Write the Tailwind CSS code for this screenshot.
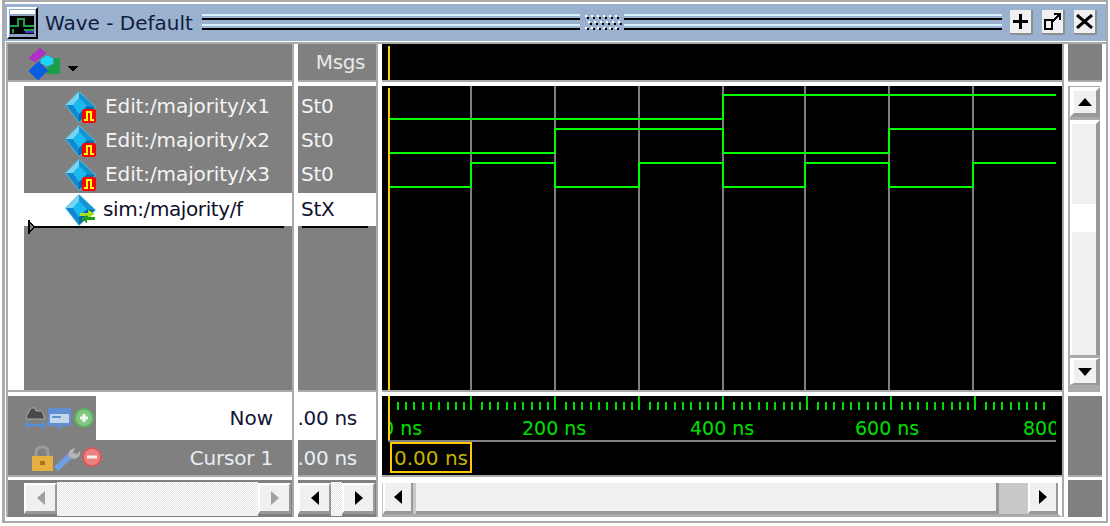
<!DOCTYPE html>
<html lang="en">
<head>
    <meta charset="UTF-8">
    <title>Wave - Default</title>
    <script src="https://cdn.jsdelivr.net/npm/@tailwindcss/browser@4"></script>
</head>
<body class="bg-white font-['DejaVu_Sans'] text-[20px] overflow-hidden">
    <svg width="0" height="0" class="absolute">
        <symbol id="diamond" viewBox="0 0 32 32">
            <polygon points="14,0 31,16 14,32 0,14" fill="#58c0d8" />
            <polygon points="14,1 1,14 8,14 14,7" fill="#78d4f0" />
            <polygon points="14,7 8,14 14,23 22,15" fill="#18b8f0" />
            <polygon points="14,1 14,7 22,15 30,16" fill="#1094d4" />
            <polygon points="1,14 8,14 14,23 14,31" fill="#1088d0" />
            <polygon points="14,23 22,15 30,16 14,31" fill="#0868a8" />
        </symbol>
        <symbol id="pulse" viewBox="0 0 14 14">
            <rect x="1" y="0" width="12" height="14" fill="#ff0000" />
            <rect x="0" y="1" width="14" height="12" fill="#ff0000" />
            <path d="M2 11h3V3h4v8h3" fill="none" stroke="#ffff00" stroke-width="2" />
        </symbol>
    </svg>

    <div class="ml-[2px] w-[1106px] h-[523px] border-t-2 border-b-2 border-l-[3px] border-r-2 border-[#aaaaaa] bg-white">
        <!-- title bar -->
        <div class="mt-[2px] h-[37px] bg-[#9ab1cf] flex items-center pl-[2px]">
            <div class="w-[31px] h-[32px] border-2 border-t-white border-l-white border-r-black border-b-black bg-[#8ea6c6] flex flex-col p-[1px] gap-[2px] shrink-0">
                <div class="h-[4px] bg-white"></div>
                <svg width="24" height="18" viewBox="0 0 24 18" shape-rendering="crispEdges">
                    <rect width="24" height="18" fill="#000" />
                    <path d="M0 10h8V3h6v7h10" fill="none" stroke="#1fa04a" stroke-width="2" />
                    <path d="M3 13v4M14 14h10" fill="none" stroke="#1fa04a" stroke-width="2" />
                    <rect x="15" y="15" width="9" height="2" fill="#4a30d0" />
                </svg>
            </div>
            <span class="ml-[7px] w-[157px] shrink-0 text-[20px] text-[#101c3c] leading-none">Wave - Default</span>
            <div class="w-[378px] h-[16px] mb-[1px] shrink-0 flex flex-col">
                <div class="h-[2px] bg-[#d2f2fc]"></div>
                <div class="h-[2px] mt-[2px] bg-black"></div>
                <div class="h-[2px] mt-[4px] bg-[#d2f2fc]"></div>
                <div class="h-[2px] mt-[2px] bg-black"></div>
            </div>
            <svg class="ml-[4px] mb-[1px] shrink-0" width="38" height="16" viewBox="0 0 38 16" shape-rendering="crispEdges">
                <path d="M1 1h2v2h-2zM7 1h2v2h-2zM13 1h2v2h-2zM19 1h2v2h-2zM25 1h2v2h-2zM31 1h2v2h-2zM4 7h2v2h-2zM10 7h2v2h-2zM16 7h2v2h-2zM22 7h2v2h-2zM28 7h2v2h-2zM34 7h2v2h-2zM1 13h2v2h-2zM7 13h2v2h-2zM13 13h2v2h-2zM19 13h2v2h-2zM25 13h2v2h-2zM31 13h2v2h-2z" fill="#fff" />
                <path d="M3 3h2v2h-2zM9 3h2v2h-2zM15 3h2v2h-2zM21 3h2v2h-2zM27 3h2v2h-2zM33 3h2v2h-2zM6 9h2v2h-2zM12 9h2v2h-2zM18 9h2v2h-2zM24 9h2v2h-2zM30 9h2v2h-2zM36 9h2v2h-2zM3 14h2v2h-2zM9 14h2v2h-2zM15 14h2v2h-2zM21 14h2v2h-2zM27 14h2v2h-2zM33 14h2v2h-2z" fill="#000" />
            </svg>
            <div class="ml-[2px] w-[378px] h-[16px] mb-[1px] shrink-0 flex flex-col">
                <div class="h-[2px] bg-[#d2f2fc]"></div>
                <div class="h-[2px] mt-[2px] bg-black"></div>
                <div class="h-[2px] mt-[4px] bg-[#d2f2fc]"></div>
                <div class="h-[2px] mt-[2px] bg-black"></div>
            </div>
            <div class="ml-[8px] flex gap-[9px] shrink-0">
                <div class="w-[23px] h-[25px] bg-[#f0f0f0] border-b-2 border-r-2 border-[#8f8f8f] flex items-center justify-center">
                    <svg width="15" height="15" viewBox="0 0 15 15"><path d="M6 0h3v6h6v3H9v6H6V9H0V6h6z" fill="#000" /></svg>
                </div>
                <div class="w-[23px] h-[25px] bg-[#f0f0f0] border-b-2 border-r-2 border-[#8f8f8f] flex items-center justify-center">
                    <svg width="17" height="17" viewBox="0 0 17 17" shape-rendering="crispEdges" fill="none" stroke="#000" stroke-width="2"><path d="M1 7h7v9H1z" /><path d="M10 1h6v6M16 1l-8 8" /></svg>
                </div>
                <div class="w-[23px] h-[25px] bg-[#f0f0f0] border-b-2 border-r-2 border-[#8f8f8f] flex items-center justify-center">
                    <svg width="17" height="15" viewBox="0 0 17 15" fill="none" stroke="#000" stroke-width="3"><path d="M1 1l15 13M16 1L1 14" /></svg>
                </div>
            </div>
        </div>
        <div class="h-[1px] bg-white"></div>
        <div class="h-[2px] bg-[#aaaaaa] ml-[1px]"></div>

        <div class="flex ml-[1px]">
            <div class="w-[2px] h-[473px] bg-[#aaaaaa]"></div>

            <!-- names column -->
            <div class="w-[284px] shrink-0 flex flex-col">
                <div class="h-[36px] bg-[#808080] flex items-start pl-[20px] pt-[2px]">
                    <svg width="50" height="34" viewBox="0 0 50 34" shape-rendering="crispEdges">
                        <polygon points="0,12 12,2 19,7 7,16" fill="#b030c8" />
                        <rect x="19" y="12" width="13" height="16" fill="#18a048" />
                        <polygon points="10,15 20,25 10,34 0,25" fill="#0a5ce0" />
                        <polygon points="12,13 19,9 25,12 25,18 19,21 12,17" fill="#18d8f8" stroke="#5f8a9a" />
                        <polygon points="40,20 50,20 45,26" fill="#000" />
                    </svg>
                </div>
                <div class="h-[2px] bg-[#aaaaaa]"></div>
                <div class="h-[4px] bg-white"></div>
                <div class="h-[304px] flex">
                    <div class="w-[16px] bg-white"></div>
                    <div class="flex-1 bg-[#808080] flex flex-col">
                        <div class="h-[4px]"></div>
                        <div class="h-[34px] flex items-center pl-[41px] gap-[8px] text-[#f4f4f4] tracking-[-0.1px]">
                            <div class="relative w-[32px] h-[32px] shrink-0">
                                <svg width="32" height="32"><use href="#diamond" /></svg>
                                <svg class="absolute left-[17px] top-[18px]" width="14" height="14"><use href="#pulse" /></svg>
                            </div>
                            <span class="leading-none -mt-[2px]">Edit:/majority/x1</span>
                        </div>
                        <div class="h-[34px] flex items-center pl-[41px] gap-[8px] text-[#f4f4f4] tracking-[-0.1px]">
                            <div class="relative w-[32px] h-[32px] shrink-0">
                                <svg width="32" height="32"><use href="#diamond" /></svg>
                                <svg class="absolute left-[17px] top-[18px]" width="14" height="14"><use href="#pulse" /></svg>
                            </div>
                            <span class="leading-none -mt-[2px]">Edit:/majority/x2</span>
                        </div>
                        <div class="h-[34px] flex items-center pl-[41px] gap-[8px] text-[#f4f4f4] tracking-[-0.1px]">
                            <div class="relative w-[32px] h-[32px] shrink-0">
                                <svg width="32" height="32"><use href="#diamond" /></svg>
                                <svg class="absolute left-[17px] top-[18px]" width="14" height="14"><use href="#pulse" /></svg>
                            </div>
                            <span class="leading-none -mt-[2px]">Edit:/majority/x3</span>
                        </div>
                        <div class="h-[33px] mt-[1px] bg-white flex items-center pl-[41px] gap-[6px] text-[#10102a] tracking-[-0.4px]">
                            <div class="relative w-[32px] h-[32px] shrink-0">
                                <svg width="32" height="32"><use href="#diamond" /></svg>
                                <svg class="absolute left-[15px] top-[16px]" width="15" height="13" viewBox="0 0 15 13" shape-rendering="crispEdges">
                                    <path d="M0 3h8V0l7 4-7 4V6H0z" fill="#a8e020" />
                                    <path d="M7 5v2H15v3H7v3L1 9z" fill="#20a018" />
                                </svg>
                            </div>
                            <span class="leading-none -mt-[2px]">sim:/majority/f</span>
                        </div>
                        <div class="relative h-[2px] bg-black ml-[4px] mr-[8px]">
                            <svg class="absolute left-0 top-[-6px]" width="7" height="14" viewBox="0 0 7 14" shape-rendering="crispEdges"><path d="M1 1l5 6-5 6z" fill="#808080" stroke="#000" stroke-width="1.5" /></svg>
                        </div>
                    </div>
                </div>
                <div class="h-[2px] bg-[#aaaaaa]"></div>
                <div class="h-[4px] bg-white"></div>
                <div class="h-[44px] flex">
                    <div class="w-[88px] bg-[#808080] pl-[16px] pt-[9px]">
                        <svg class="blur-[0.6px]" width="72" height="28" viewBox="0 0 72 28">
                            <path d="M3 10l4-7h4l1 3h6l3 8H2z" fill="#4a4a4a" stroke="#a8a8a8" />
                            <path d="M2 20h19M2 20l3-3M2 20l3 3M21 20l-3-3M21 20l-3 3" fill="none" stroke="#4f8fdc" stroke-width="2" />
                            <path d="M24 3h23v18H38l-3 4-3-4h-8z" fill="#5f8fd0" />
                            <rect x="26" y="9" width="19" height="9" fill="#c4d6ea" />
                            <rect x="28" y="11" width="9" height="2" fill="#5f8fd0" />
                            <circle cx="60" cy="13" r="10" fill="#5cb05c" />
                            <circle cx="60" cy="13" r="8" fill="#84c484" />
                            <path d="M60 9v8M56 13h8" stroke="#eef8ee" stroke-width="3" />
                        </svg>
                    </div>
                    <div class="flex-1 bg-white flex items-center justify-end pr-[19px] text-[#14143a]">Now</div>
                </div>
                <div class="h-[35px] bg-[#808080] flex items-center pr-[19px]">
                    <svg class="ml-[24px] blur-[0.6px]" width="74" height="28" viewBox="0 0 74 28">
                        <path d="M4 13V8q0-5 6-5t6 5v5" fill="none" stroke="#9a9a9a" stroke-width="3" />
                        <rect x="0" y="12" width="21" height="15" fill="#e8b040" />
                        <rect x="8" y="17" width="5" height="4" fill="#a87820" />
                        <path d="M24 25L38 12" stroke="#6f9fe0" stroke-width="6" />
                        <path d="M37 13q-2-6 3-8l3-1-2 5 4 1 3-3q1 5-3 7t-8-1z" fill="#b4b4b4" />
                        <circle cx="60" cy="13" r="10" fill="#d85858" />
                        <circle cx="60" cy="13" r="8" fill="#ec8080" />
                        <path d="M55 13h10" stroke="#f8eeee" stroke-width="3" />
                    </svg>
                    <span class="ml-auto text-[#e8eef4] tracking-[-0.2px]">Cursor 1</span>
                </div>
                <div class="h-[2px] bg-[#aaaaaa]"></div>
                <div class="h-[3px] bg-white"></div>
                <div class="h-[37px] bg-[#808080] flex items-center pl-[16px] pr-[1px]">
                    <div class="w-[33px] h-[31px] bg-[#f0f0f0] border-t-2 border-l-2 border-b-[3px] border-r-2 border-t-white border-l-white border-b-[#999999] border-r-[#999999] flex items-center justify-center">
                        <svg width="8" height="14" viewBox="0 0 8 14"><path d="M8 0v14L0 7z" fill="#a0a0a0" /></svg>
                    </div>
                    <div class="flex-1 h-[34px] bg-[repeating-conic-gradient(#ffffff_0_25%,#e4e4e4_0_50%)] bg-[length:2px_2px]"></div>
                    <div class="w-[33px] h-[31px] bg-[#f0f0f0] border-t-2 border-l-2 border-b-[3px] border-r-2 border-t-white border-l-white border-b-[#999999] border-r-[#999999] flex items-center justify-center">
                        <svg width="8" height="14" viewBox="0 0 8 14"><path d="M0 0v14l8-7z" fill="#a0a0a0" /></svg>
                    </div>
                </div>
            </div>

            <div class="w-[2px] bg-[#aaaaaa] shrink-0"></div>
            <div class="w-[4px] bg-white shrink-0"></div>

            <!-- msgs column -->
            <div class="w-[78px] shrink-0 flex flex-col">
                <div class="h-[36px] bg-[#808080] flex items-center justify-end pr-[11px] text-[#e8e8e8] tracking-[-0.4px]">Msgs</div>
                <div class="h-[2px] bg-[#aaaaaa]"></div>
                <div class="h-[4px] bg-white"></div>
                <div class="h-[304px] bg-[#808080] flex flex-col pl-[3px] text-[#f4f4f4] tracking-[-0.3px]">
                    <div class="h-[4px]"></div>
                    <div class="h-[34px] flex items-center"><span class="leading-none -mt-[2px]">St0</span></div>
                    <div class="h-[34px] flex items-center"><span class="leading-none -mt-[2px]">St0</span></div>
                    <div class="h-[34px] flex items-center"><span class="leading-none -mt-[2px]">St0</span></div>
                    <div class="h-[33px] mt-[1px] -ml-[3px] pl-[3px] bg-white flex items-center text-[#10102a]"><span class="leading-none -mt-[2px]">StX</span></div>
                    <div class="h-[2px] bg-black ml-[1px] mr-[8px]"></div>
                </div>
                <div class="h-[2px] bg-[#aaaaaa]"></div>
                <div class="h-[4px] bg-white"></div>
                <div class="h-[44px] bg-white flex items-center justify-end pr-[19px] overflow-hidden text-[#14143a] whitespace-nowrap tracking-[-0.3px]">0.00 ns</div>
                <div class="h-[35px] bg-[#808080] flex items-center justify-end pr-[19px] overflow-hidden text-[#e8eef4] whitespace-nowrap tracking-[-0.3px]">0.00 ns</div>
                <div class="h-[2px] bg-[#aaaaaa]"></div>
                <div class="h-[3px] bg-white"></div>
                <div class="h-[37px] bg-[#808080] flex items-center pr-[1px]">
                    <div class="w-[33px] h-[31px] bg-[#f0f0f0] border-t-2 border-l-2 border-b-[3px] border-r-2 border-t-white border-l-white border-b-[#999999] border-r-[#999999] flex items-center justify-center">
                        <svg width="8" height="14" viewBox="0 0 8 14"><path d="M8 0v14L0 7z" fill="#000" /></svg>
                    </div>
                    <div class="flex-1 h-[34px] bg-[repeating-conic-gradient(#ffffff_0_25%,#e4e4e4_0_50%)] bg-[length:2px_2px]"></div>
                    <div class="w-[33px] h-[31px] bg-[#f0f0f0] border-t-2 border-l-2 border-b-[3px] border-r-2 border-t-white border-l-white border-b-[#999999] border-r-[#999999] flex items-center justify-center">
                        <svg width="8" height="14" viewBox="0 0 8 14"><path d="M0 0v14l8-7z" fill="#000" /></svg>
                    </div>
                </div>
            </div>

            <div class="w-[2px] bg-[#aaaaaa] shrink-0"></div>
            <div class="w-[4px] bg-white shrink-0"></div>

            <!-- wave column -->
            <div class="w-[680px] shrink-0 flex flex-col">
                <div class="h-[36px] bg-black pl-[6px] pt-[2px]">
                    <div class="w-[2px] h-[34px] bg-[#ffd000]"></div>
                </div>
                <div class="h-[2px] bg-[#aaaaaa]"></div>
                <div class="h-[4px] bg-white"></div>
                <svg class="block" width="680" height="304" viewBox="0 0 680 304" shape-rendering="crispEdges">
                    <rect width="680" height="304" fill="#000" />
                    <path d="M89 0v304M173 0v304M257 0v304M341 0v304M423 0v304M507 0v304M591 0v304" stroke="#808080" stroke-width="2" />
                    <rect x="6" y="2" width="2" height="302" fill="#ffd000" />
                    <g fill="none" stroke="#00ff00" stroke-width="2">
                        <path d="M8 33H341V9H674" />
                        <path d="M8 67H173V43H341V67H507V43H674" />
                        <path d="M8 101H89V77H173V101H257V77H341V101H423V77H507V101H591V77H674" />
                    </g>
                </svg>
                <div class="h-[2px] bg-[#aaaaaa]"></div>
                <div class="h-[4px] bg-white"></div>
                <div class="relative h-[44px] bg-black">
                    <svg class="absolute left-0 top-0" width="674" height="16" shape-rendering="crispEdges">
                        <defs>
                            <pattern id="ticks" x="4" y="0" width="84" height="16" patternUnits="userSpaceOnUse">
                                <rect x="0" y="0" width="2" height="14" fill="#00e000" />
                                <rect x="11" y="6" width="2" height="8" fill="#00e000" />
                                <rect x="19" y="6" width="2" height="8" fill="#00e000" />
                                <rect x="27" y="6" width="2" height="8" fill="#00e000" />
                                <rect x="36" y="6" width="2" height="8" fill="#00e000" />
                                <rect x="44" y="6" width="2" height="8" fill="#00e000" />
                                <rect x="52" y="6" width="2" height="8" fill="#00e000" />
                                <rect x="61" y="6" width="2" height="8" fill="#00e000" />
                                <rect x="69" y="6" width="2" height="8" fill="#00e000" />
                                <rect x="77" y="6" width="2" height="8" fill="#00e000" />
                            </pattern>
                        </defs>
                        <rect x="13" width="656" height="16" fill="url(#ticks)" />
                    </svg>
                    <div class="absolute left-[6px] top-0 w-[2px] h-[44px] bg-[#ffd000]"></div>
                    <div class="absolute left-[8px] right-[6px] top-[20px] h-[24px] overflow-hidden text-[19px] leading-[24px] text-[#00e000] whitespace-nowrap">
                        <span class="absolute left-[-8px]">0 ns</span>
                        <span class="absolute left-[132px]">200 ns</span>
                        <span class="absolute left-[300px]">400 ns</span>
                        <span class="absolute left-[465px]">600 ns</span>
                        <span class="absolute left-[633px]">800 ns</span>
                    </div>
                    <div class="absolute left-[6px] right-[6px] bottom-[-2px] h-[2px] bg-[#808080]"></div>
                </div>
                <div class="h-[35px] bg-black pl-[8px] pt-[2px]">
                    <div class="w-[82px] h-[31px] border-2 border-[#ffc800] flex items-center pl-[2px] text-[#c8b400] whitespace-nowrap">0.00 ns</div>
                </div>
                <div class="h-[2px] bg-[#aaaaaa]"></div>
                <div class="h-[3px] bg-white"></div>
                <div class="h-[37px] bg-[#c8c8c8] border-t-[3px] border-b-[3px] border-r-[4px] border-t-white border-b-[#aaaaaa] border-r-white flex items-center pl-[1px]">
                    <div class="w-[30px] h-full bg-[#f0f0f0] border-l-2 border-l-white border-b-[3px] border-r-2 border-b-[#999999] border-r-[#999999] flex items-center justify-center">
                        <svg width="8" height="14" viewBox="0 0 8 14"><path d="M8 0v14L0 7z" fill="#000" /></svg>
                    </div>
                    <div class="ml-[3px] w-[583px] h-full bg-[#f0f0f0] border-b-[3px] border-r-[3px] border-[#999999]"></div>
                    <div class="ml-auto w-[30px] h-full bg-[#f0f0f0] border-l-2 border-l-white border-b-[3px] border-r-2 border-b-[#999999] border-r-[#999999] flex items-center justify-center">
                        <svg width="8" height="14" viewBox="0 0 8 14"><path d="M0 0v14l8-7z" fill="#000" /></svg>
                    </div>
                </div>
            </div>

            <div class="w-[2px] bg-[#aaaaaa] shrink-0"></div>
            <div class="w-[4px] bg-white shrink-0"></div>

            <!-- right column -->
            <div class="w-[34px] shrink-0 flex flex-col">
                <div class="h-[36px] bg-[#808080]"></div>
                <div class="h-[2px] bg-[#aaaaaa]"></div>
                <div class="h-[4px] bg-white"></div>
                <div class="h-[304px] w-[32px] bg-[#aaaaaa] flex flex-col pl-[2px] pt-[1px] pb-[5px] gap-[3px]">
                    <div class="h-[30px] bg-[#f0f0f0] border-t-[4px] border-l-[4px] border-b-[4px] border-r-[4px] border-t-white border-l-white border-b-[#999999] border-r-[#999999] flex items-center justify-center">
                        <svg width="14" height="8" viewBox="0 0 14 8"><path d="M0 8h14L7 0z" fill="#000" /></svg>
                    </div>
                    <div class="flex-1 bg-[#f0f0f0] border-t-[4px] border-l-[2px] border-r-[4px] border-t-white border-l-white border-r-[#999999] flex flex-col">
                        <div class="h-[80px]"></div>
                        <div class="h-[28px] bg-white"></div>
                    </div>
                    <div class="h-[27px] bg-[#f0f0f0] border-t-[2px] border-l-[4px] border-b-[2px] border-r-[4px] border-t-white border-l-white border-b-[#999999] border-r-[#999999] flex items-center justify-center">
                        <svg width="14" height="8" viewBox="0 0 14 8"><path d="M0 0h14L7 8z" fill="#000" /></svg>
                    </div>
                </div>
                <div class="h-[2px] bg-[#aaaaaa] w-[32px]"></div>
                <div class="h-[4px] bg-white"></div>
                <div class="h-[79px] bg-[#808080]"></div>
                <div class="h-[2px] bg-[#aaaaaa]"></div>
                <div class="h-[3px] bg-white"></div>
                <div class="h-[37px] bg-[#808080]"></div>
            </div>
        </div>
    </div>
</body>
</html>
